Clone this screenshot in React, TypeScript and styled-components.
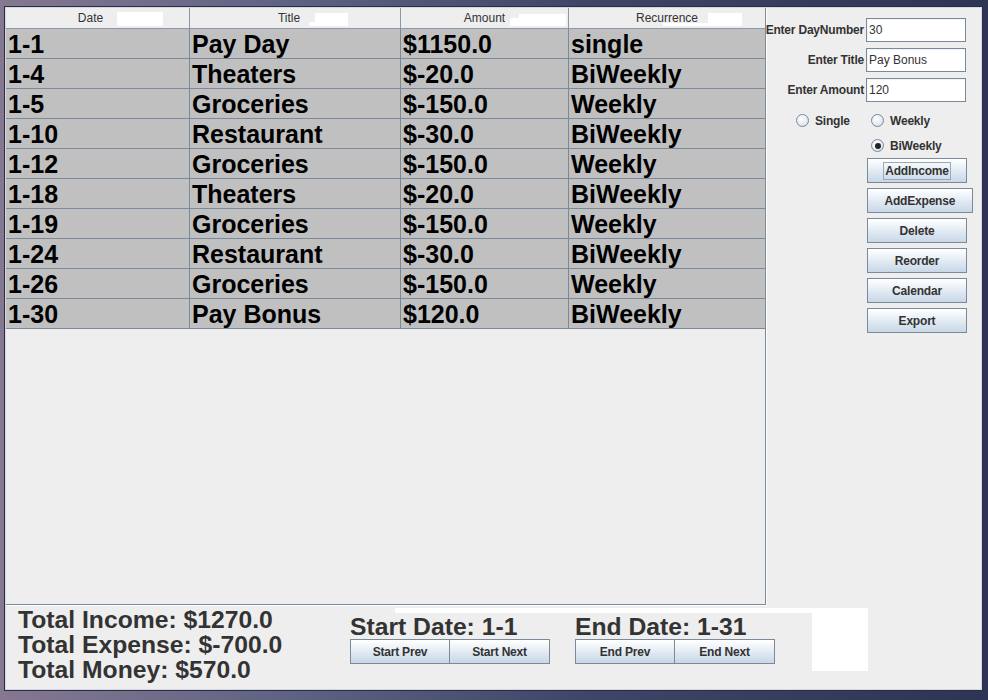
import styled, { createGlobalStyle } from "styled-components";

const rows = [
  { date: "1-1", title: "Pay Day", amount: "$1150.0", rec: "single" },
  { date: "1-4", title: "Theaters", amount: "$-20.0", rec: "BiWeekly" },
  { date: "1-5", title: "Groceries", amount: "$-150.0", rec: "Weekly" },
  { date: "1-10", title: "Restaurant", amount: "$-30.0", rec: "BiWeekly" },
  { date: "1-12", title: "Groceries", amount: "$-150.0", rec: "Weekly" },
  { date: "1-18", title: "Theaters", amount: "$-20.0", rec: "BiWeekly" },
  { date: "1-19", title: "Groceries", amount: "$-150.0", rec: "Weekly" },
  { date: "1-24", title: "Restaurant", amount: "$-30.0", rec: "BiWeekly" },
  { date: "1-26", title: "Groceries", amount: "$-150.0", rec: "Weekly" },
  { date: "1-30", title: "Pay Bonus", amount: "$120.0", rec: "BiWeekly" },
];

// leftover paint from the header renderer, kept because the screenshot has it
const headers = [
  { label: "Date", shift: 14, blots: [{ l: 111, t: 4, w: 46, h: 14 }] },
  {
    label: "Title",
    shift: 12,
    blots: [
      { l: 125, t: 5, w: 33, h: 13 },
      { l: 119, t: 14, w: 6, h: 4 },
    ],
  },
  {
    label: "Amount",
    shift: 0,
    blots: [
      { l: 118, t: 6, w: 47, h: 12 },
      { l: 109, t: 10, w: 9, h: 8 },
    ],
  },
  {
    label: "Recurrence",
    shift: 0,
    blots: [
      { l: 139, t: 5, w: 34, h: 13 },
      { l: 94, t: 15, w: 45, h: 3 },
    ],
  },
];

const sideButtons = ["AddIncome", "AddExpense", "Delete", "Reorder", "Calendar", "Export"];

export default function App() {
  return (
    <>
      <GlobalStyle />
      <Desktop>
        <Frame>
          <TopRow>
            <TablePane>
              <Grid>
                {headers.map((h) => (
                  <HeaderCell key={h.label} $shift={h.shift}>
                    {h.label}
                    {h.blots.map((b, i) => (
                      <Blot
                        key={i}
                        style={{ left: b.l, top: b.t, width: b.w, height: b.h }}
                      />
                    ))}
                  </HeaderCell>
                ))}
                {rows.map((r, i) => (
                  <Row key={i}>
                    <Cell>{r.date}</Cell>
                    <Cell>{r.title}</Cell>
                    <Cell>{r.amount}</Cell>
                    <Cell $last>{r.rec}</Cell>
                  </Row>
                ))}
              </Grid>
            </TablePane>

            <SidePanel>
              <Form>
                <Label>Enter DayNumber</Label>
                <Field defaultValue="30" />
                <Label>Enter Title</Label>
                <Field defaultValue="Pay Bonus" />
                <Label>Enter Amount</Label>
                <Field defaultValue="120" />
              </Form>

              <Radios>
                <RadioItem $col={1}>
                  <RadioDot />
                  Single
                </RadioItem>
                <RadioItem $col={2}>
                  <RadioDot />
                  Weekly
                </RadioItem>
                <RadioItem $col={2}>
                  <RadioDot $checked />
                  BiWeekly
                </RadioItem>
              </Radios>

              <ButtonStack>
                {sideButtons.map((b, i) => (
                  <SideButton key={b}>
                    {i === 0 ? <Focus>{b}</Focus> : b}
                  </SideButton>
                ))}
              </ButtonStack>
            </SidePanel>
          </TopRow>

          <BottomPanel>
            <Totals>
              <div>Total Income: $1270.0</div>
              <div>Total Expense: $-700.0</div>
              <div>Total Money: $570.0</div>
            </Totals>

            <DateGroup>
              <DateLabel>Start Date: 1-1</DateLabel>
              <Pair>
                <NavButton>Start Prev</NavButton>
                <NavButton>Start Next</NavButton>
              </Pair>
            </DateGroup>

            <DateGroup>
              <DateLabel>End Date: 1-31</DateLabel>
              <Pair>
                <NavButton>End Prev</NavButton>
                <NavButton>End Next</NavButton>
              </Pair>
            </DateGroup>

            <Strip />
            <Patch />
          </BottomPanel>
        </Frame>
      </Desktop>
    </>
  );
}

const GlobalStyle = createGlobalStyle`
  body {
    margin: 0;
    background: #1a1c2c;
    font-family: "Liberation Sans", Arial, sans-serif;
  }
  * {
    box-sizing: border-box;
  }
`;

const Desktop = styled.div`
  width: 988px;
  height: 700px;
  padding: 7px 6px 10px 5px;
  background: linear-gradient(90deg, #857891 0%, #5d6283 30%, #3f4566 60%, #2e3453 100%);
`;

const Frame = styled.div`
  height: 100%;
  display: flex;
  flex-direction: column;
  background: #eeeeee;
  border: 1px solid #d4d6e0;
  outline: 1px solid #2a2d44;
`;

const TopRow = styled.div`
  display: flex;
  height: 598px;
`;

const TablePane = styled.div`
  width: 760px;
  height: 597px;
  background: #eeeeee;
  border-right: 1px solid #7a8a9a;
  border-bottom: 1px solid #7a8a9a;
  box-shadow: 1px 1px 0 #ffffff;
`;

const Grid = styled.div`
  display: grid;
  grid-template-columns: 184px 211px 168px 196px;
`;

const HeaderCell = styled.div<{ $shift: number }>`
  position: relative;
  height: 21px;
  line-height: 20px;
  text-align: center;
  padding-right: ${(p) => p.$shift}px;
  font-size: 12px;
  color: #333333;
  background: #eeeeee;
  border-right: 1px solid #8a98a8;
  border-bottom: 1px solid #8a98a8;
  &:nth-child(4) {
    border-right: none;
  }
`;

const Blot = styled.span`
  position: absolute;
  background: #ffffff;
`;

const Row = styled.div`
  display: contents;
`;

const Cell = styled.div<{ $last?: boolean }>`
  height: 30px;
  padding: 1px 0 0 2px;
  line-height: 29px;
  font-size: 25px;
  font-weight: bold;
  color: #000000;
  background: #c0c0c0;
  white-space: nowrap;
  overflow: hidden;
  border-bottom: 1px solid #7a8a9a;
  border-right: ${(p) => (p.$last ? "none" : "1px solid #7a8a9a")};
`;

const SidePanel = styled.div`
  flex: 1;
  border-left: 1px solid #ffffff;
  padding-top: 10px;
`;

const Form = styled.div`
  display: grid;
  grid-template-columns: minmax(0, 1fr) 100px;
  column-gap: 2px;
  row-gap: 6px;
  padding-right: 15px;
`;

const Label = styled.div`
  display: flex;
  justify-content: flex-end;
  align-items: center;
  white-space: nowrap;
  font-size: 12px;
  font-weight: bold;
  letter-spacing: -0.2px;
  color: #333333;
`;

const Field = styled.input`
  height: 24px;
  width: 100px;
  padding: 0 0 0 2px;
  border: 1px solid #7a8a99;
  box-shadow: inset 1px 1px 0 #f4f4f4;
  background: #ffffff;
  font-family: "Liberation Sans", Arial, sans-serif;
  font-size: 12px;
  color: #333333;
  outline: none;
`;

const Radios = styled.div`
  display: grid;
  grid-template-columns: 75px 75px;
  grid-auto-rows: 25px;
  margin: 6px 0 0 29px;
`;

const RadioItem = styled.div<{ $col: number }>`
  grid-column: ${(p) => p.$col};
  display: flex;
  align-items: center;
  gap: 6px;
  font-size: 12px;
  font-weight: bold;
  letter-spacing: -0.2px;
  color: #333333;
`;

const RadioDot = styled.span<{ $checked?: boolean }>`
  position: relative;
  width: 13px;
  height: 13px;
  border-radius: 50%;
  border: 1px solid #7a8a99;
  background: radial-gradient(circle at 40% 35%, #ffffff 0%, #e4ebf3 55%, #c4d1e0 100%);
  &::after {
    content: "";
    display: ${(p) => (p.$checked ? "block" : "none")};
    position: absolute;
    left: 2.5px;
    top: 2.5px;
    width: 6px;
    height: 6px;
    border-radius: 50%;
    background: #222222;
  }
`;

const ButtonStack = styled.div`
  display: flex;
  flex-direction: column;
  align-items: flex-start;
  gap: 5px;
  margin-left: 100px;
`;

const buttonLook = `
  height: 25px;
  border: 1px solid #7a8a99;
  background: linear-gradient(180deg, #ffffff 0%, #f2f6fa 25%, #dde7f1 60%, #c8d7e7 100%);
  font-family: "Liberation Sans", Arial, sans-serif;
  font-size: 12px;
  font-weight: bold;
  letter-spacing: -0.2px;
  color: #333333;
  display: flex;
  align-items: center;
  justify-content: center;
  white-space: nowrap;
`;

const SideButton = styled.div`
  ${buttonLook}
  min-width: 100px;
  padding: 0 16.5px;
`;

const Focus = styled.span`
  outline: 1px solid #9aa8b8;
  outline-offset: 1px;
  line-height: 14px;
`;

const BottomPanel = styled.div`
  position: relative;
  flex: 1;
  display: flex;
  padding: 1px 0 0 12px;
`;

const Totals = styled.div`
  width: 332px;
  font-size: 24.7px;
  font-weight: bold;
  line-height: 25px;
  color: #333333;
  white-space: nowrap;
`;

const DateGroup = styled.div`
  display: flex;
  flex-direction: column;
  padding-top: 8px;
  margin-right: 25px;
`;

const DateLabel = styled.div`
  font-size: 24.7px;
  font-weight: bold;
  line-height: 24px;
  color: #333333;
  white-space: nowrap;
`;

const Pair = styled.div`
  display: flex;
`;

const NavButton = styled.div`
  ${buttonLook}
  width: 100px;
  padding: 0;
  & + & {
    border-left: none;
  }
`;

const Strip = styled.div`
  position: absolute;
  left: 389px;
  top: 2px;
  width: 417px;
  height: 5px;
  background: #ffffff;
`;

const Patch = styled.div`
  position: absolute;
  left: 806px;
  top: 2px;
  width: 56px;
  height: 63px;
  background: #ffffff;
`;
